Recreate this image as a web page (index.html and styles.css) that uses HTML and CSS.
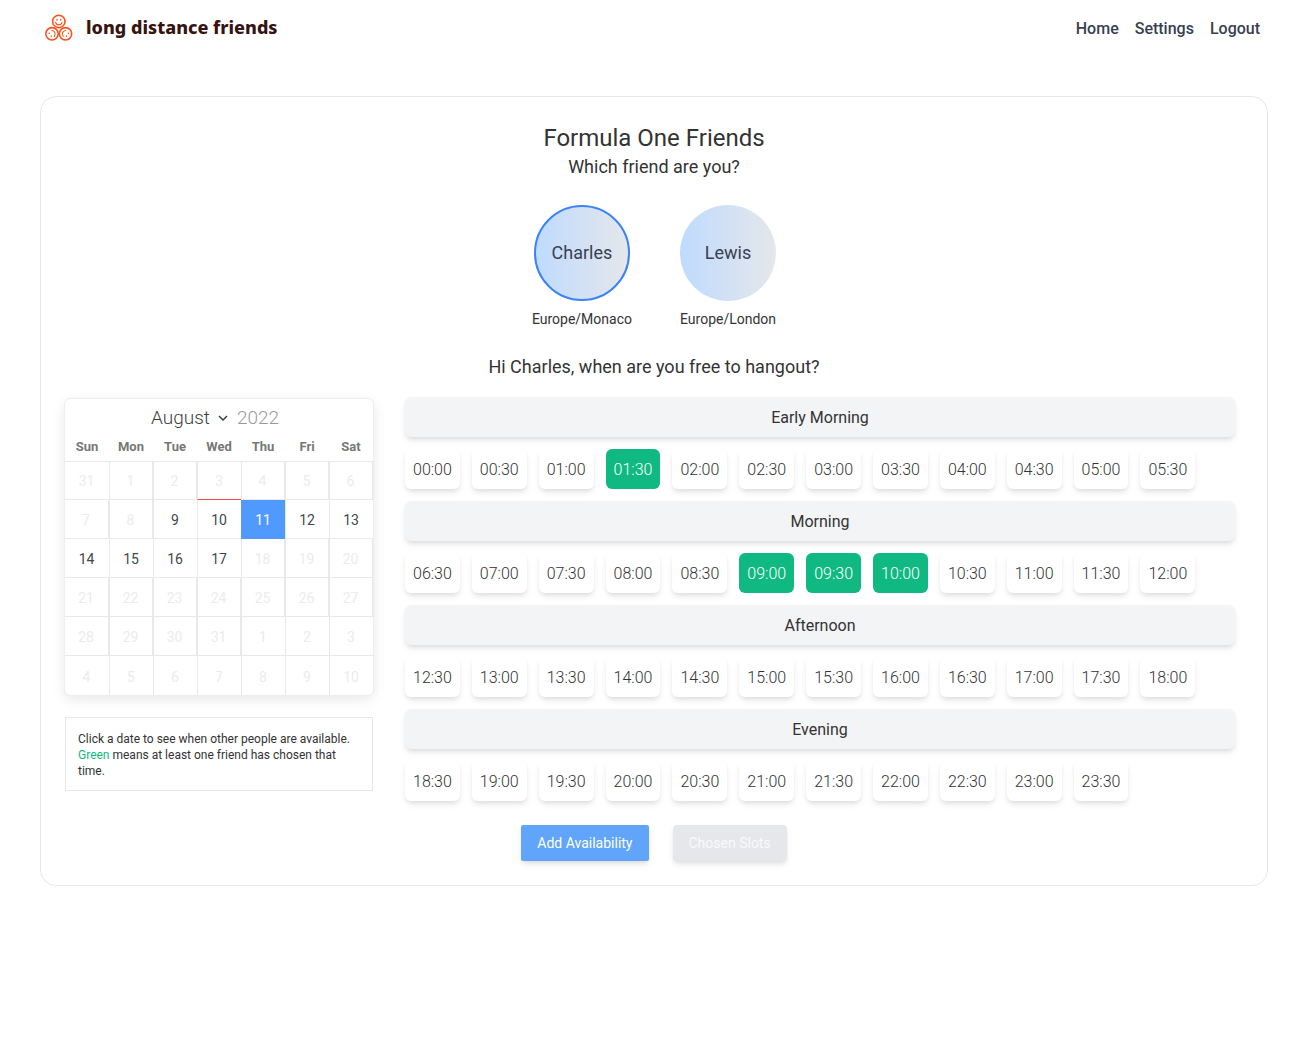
FILE: index.html
```html
<!DOCTYPE html>
<html lang="en">
<head>
<meta charset="utf-8">
<meta name="viewport" content="width=device-width, initial-scale=1">
<title>long distance friends</title>
<link rel="stylesheet" href="styles.css">
</head>
<body>
<header class="site-header">
  <a class="brand" href="#">
    <svg class="brand-mark" viewBox="0 0 28 28" width="28" height="28" fill="none" stroke="#f9541d" stroke-width="1.6" stroke-linecap="round" aria-hidden="true">
      <circle cx="13.8" cy="7.4" r="6.200"/>
      <circle cx="7" cy="19.800" r="6.200"/>
      <circle cx="20.500" cy="19.800" r="6.200"/>
      <path d="M10.600 8.400c.8 3.300 5.600 3.300 6.400 0M6.800 16.500c3 .2 4.300 3.400 2.500 5.800M20.700 16.500c-3 .2-4.300 3.400-2.500 5.800" stroke-width="1.100"/>
      <path d="M12 5.500v.6M15.700 5.500v.6M4.200 19.200v.3M6.300 22v.3M23.300 19.200v.3M21.400 22v.3" stroke-width="1.400"/>
    </svg>
    <span>long distance friends</span>
  </a>
  <nav class="site-nav">
    <a href="#">Home</a>
    <a href="#">Settings</a>
    <a href="#">Logout</a>
  </nav>
</header>

<main class="card">
  <h1>Formula One Friends</h1>
  <p class="lead">Which friend are you?</p>
  <div class="friends">
    <div class="friend"><button class="avatar selected" type="button">Charles</button><span>Europe/Monaco</span></div>
    <div class="friend"><button class="avatar" type="button">Lewis</button><span>Europe/London</span></div>
  </div>
  <p class="lead">Hi Charles, when are you free to hangout?</p>

  <div class="planner">
    <aside class="side">
      <div class="calendar">
        <div class="cal-head">
          <span class="month-wrap">
            <select class="month" aria-label="Month"><option>August</option></select>
            <svg class="chevron" viewBox="0 0 10 6" width="10" height="6" fill="none" stroke="#3c3f40" stroke-width="1.500" aria-hidden="true"><path d="M1 1l4 4 4-4"/></svg>
          </span>
          <input class="year" type="text" value="2022" aria-label="Year">
        </div>
        <table class="days">
          <thead><tr><th>Sun</th><th>Mon</th><th>Tue</th><th>Wed</th><th>Thu</th><th>Fri</th><th>Sat</th></tr></thead>
          <tbody id="days"></tbody>
        </table>
      </div>
      <p class="note">Click a date to see when other people are available. <span class="green">Green</span> means at least one friend has chosen that time.</p>
    </aside>
    <div class="slots" id="slots"></div>
  </div>

  <div class="actions">
    <button class="action primary" type="button">Add Availability</button>
    <button class="action muted" type="button" disabled>Chosen Slots</button>
  </div>
</main>
<script src="app.js"></script>
</body>
</html>
```
FILE: styles.css
```css
*, *::before, *::after { box-sizing: border-box; }

body {
  margin: 0;
  font-family: Roboto, "Liberation Sans", sans-serif;
  font-size: 16px;
  line-height: 24px;
  color: #333;
  background: #fff;
}

h1, p { margin: 0; font-weight: 400; }

button, input, select {
  font: inherit;
  color: inherit;
  margin: 0;
  padding: 0;
  border: 0;
  background: none;
}

.site-header {
  display: flex;
  align-items: center;
  justify-content: space-between;
  height: 56px;
  padding: 0 48px 0 45px;
}

.brand {
  display: flex;
  align-items: center;
  gap: 13px;
  font-family: "Noto Sans", sans-serif;
  font-size: 18px;
  line-height: 22px;
  font-weight: 800;
  color: #351411;
  text-decoration: none;
}

.brand span { padding-bottom: 2px; }

.site-nav { display: flex; gap: 16px; padding-top: 2px; }

.site-nav a {
  font-weight: 500;
  color: #374151;
  text-decoration: none;
}

.card {
  display: flex;
  flex-direction: column;
  align-items: center;
  margin: 40px;
  padding: 24px;
  border: 1px solid #e5e7eb;
  border-radius: 16px;
}

h1 { padding-top: 2px; font-size: 24px; line-height: 30px; }
.lead { font-size: 18px; line-height: 28px; }

.friends {
  display: flex;
  gap: 48px;
  margin: 24px 0;
}

.friend {
  display: flex;
  flex-direction: column;
  align-items: center;
  gap: 8px;
  font-size: 14px;
  line-height: 20px;
}

.avatar {
  width: 96px;
  height: 96px;
  border-radius: 50%;
  font-size: 18px;
  color: #374151;
  background: linear-gradient(to right, #bfdbfe, #e5e7eb);
}

.avatar.selected { border: 2px solid #3b82f6; }

.planner {
  display: flex;
  align-self: stretch;
  gap: 32px;
  margin-top: 16px;
  padding-right: 8px;
}

.side {
  flex: none;
  width: 308px;
  padding-top: 2px;
}

.calendar {
  border-radius: 5px;
  overflow: hidden;
  box-shadow: 0 0 0 1px #eee, 0 4px 14px rgba(0, 0, 0, .1);
}

.cal-head {
  display: flex;
  align-items: center;
  justify-content: center;
  gap: 9px;
  height: 34px;
  padding: 4px 8px 0 0;
  font-size: 19px;
  font-weight: 300;
  color: #3c3f40;
}

.month-wrap { display: flex; align-items: center; gap: 8px; }
.month { appearance: none; }
.year { width: 42px; color: #999; }

.days {
  width: 100%;
  table-layout: fixed;
  border-collapse: separate;
  border-spacing: 0;
}

.days th {
  height: 28px;
  padding: 0;
  font-size: 13px;
  line-height: 28px;
  font-weight: 700;
  color: #777;
}

.days td {
  height: 39px;
  padding: 0;
  border-left: 1px solid #e9e9e9;
  border-bottom: 1px solid #e9e9e9;
}

.days td:first-child { border-left: 0; }
.days tr:last-child td { border-bottom: 0; }
.days tbody tr:first-child td { border-top: 1px solid #e9e9e9; }
.days td.boxed { border-right: 1px solid #e9e9e9; }
.days tbody td.today { border-top-color: transparent; border-bottom-color: #f64747; }
.days td.chosen { background: #4f99ff; border-color: #4f99ff; }

.days button {
  display: block;
  width: 100%;
  height: 37px;
  padding: 2px 1px 0 0;
  font-size: 14px;
  color: #404848;
}

.days tr:first-child button { padding-top: 0; }

.days button:disabled { color: #ececec; }
.days .chosen button { color: #fff; }

.note {
  margin-top: 22px;
  padding: 13px 12px 11px;
  border: 1px solid #e5e7eb;
  font-size: 12px;
  line-height: 16px;
}

.green { color: #10b981; }

.slots {
  display: flex;
  flex: 1;
  flex-direction: column;
  gap: 12px;
}

.period {
  margin: 0;
  padding-top: 2px;
  border-radius: 6px;
  background: #f3f4f6;
  font-size: 16px;
  line-height: 38px;
  font-weight: 400;
  text-align: center;
}

.period, .slot, .action {
  box-shadow: 0 4px 6px -1px rgba(0, 0, 0, .1), 0 2px 4px -1px rgba(0, 0, 0, .06);
}

.times { display: flex; flex-wrap: wrap; gap: 12px; }

.slot {
  height: 40px;
  padding: 2px 8px 0;
  border-radius: 6px;
  background: #fff;
  font-weight: 300;
}

.slot.taken { background: #10b981; color: #fff; box-shadow: none; }

.actions { display: flex; gap: 24px; margin-top: 24px; }

.action {
  height: 36px;
  padding: 0 16px;
  border-radius: 2px;
  font-size: 14px;
  color: #fff;
}

.primary { background: #60a5fa; }
.muted { background: #e5e7eb; color: #f9fafb; border-radius: 4px; }
```
FILE: app.js
```js
const days = document.getElementById("days");
const first = new Date(2022, 6, 31);
for (let week = 0; week < 6; week++) {
  const row = days.insertRow();
  for (let day = 0; day < 7; day++) {
    const index = week * 7 + day;
    const date = new Date(first.getFullYear(), first.getMonth(), first.getDate() + index);
    const cell = row.insertCell();
    const button = document.createElement("button");
    button.type = "button";
    button.textContent = date.getDate();
    button.disabled = index < 9 || index > 17;
    if (button.disabled && index > 0 && index !== 3 && index < 32) cell.classList.add("boxed");
    if (index === 3) cell.classList.add("today");
    if (index === 11) cell.classList.add("chosen");
    cell.append(button);
  }
}

const taken = ["01:30", "09:00", "09:30", "10:00"];
const periods = [["Early Morning", 0, 12], ["Morning", 13, 25], ["Afternoon", 25, 37], ["Evening", 37, 48]];
const slots = document.getElementById("slots");
for (const [name, from, to] of periods) {
  const heading = document.createElement("h2");
  heading.className = "period";
  heading.textContent = name;
  const times = document.createElement("div");
  times.className = "times";
  for (let i = from; i < to; i++) {
    const label = String(Math.floor(i / 2)).padStart(2, "0") + (i % 2 ? ":30" : ":00");
    const slot = document.createElement("button");
    slot.type = "button";
    slot.className = taken.includes(label) ? "slot taken" : "slot";
    slot.textContent = label;
    times.append(slot);
  }
  slots.append(heading, times);
}
```
